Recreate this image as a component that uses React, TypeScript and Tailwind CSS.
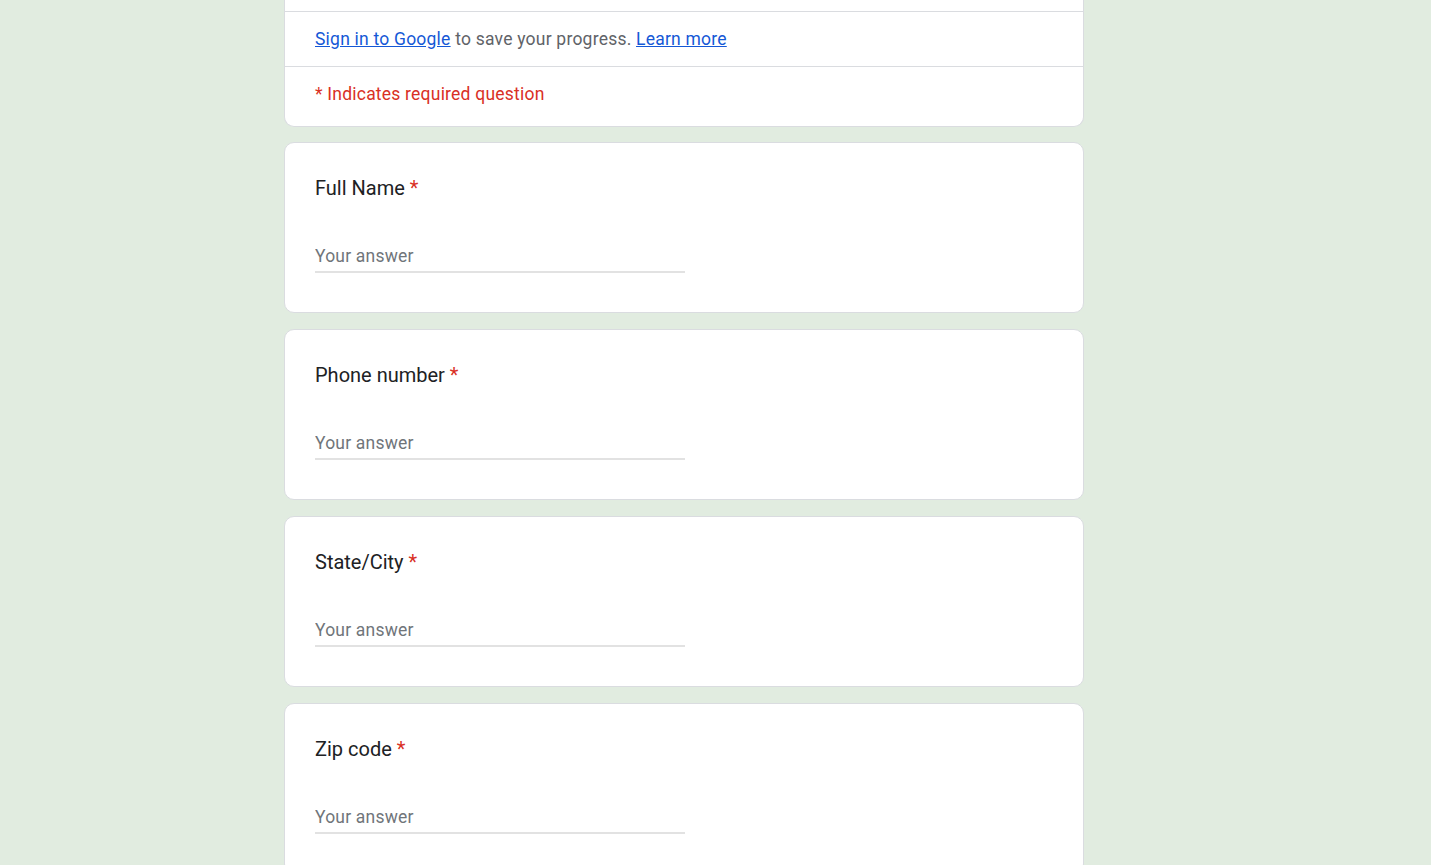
const questions = ["Full Name", "Phone number", "State/City", "Zip code"];

const QuestionCard = ({ title }: { title: string }) => (
  <div className="rounded-[10px] border border-[#dadce0] bg-white px-[30px] pt-[30px] pb-[39px]">
    <div className="h-[30px] text-[20px] leading-[30px] text-[#202124]">
      {title} <span className="text-[#d93025]">*</span>
    </div>
    <div className="mt-[41px] w-[370px]">
      <input
        type="text"
        placeholder="Your answer"
        className="block h-[24px] w-full bg-transparent text-[17.5px] leading-[24px] tracking-[0.2px] text-[#202124] outline-none placeholder:text-[#70757a]"
      />
      <div className="mt-[3px] h-[2px] bg-[#e2e2e2]" />
    </div>
  </div>
);

export default function App() {
  return (
    <div className="min-h-screen bg-[#e1ece0] font-['Roboto',sans-serif]">
      <div className="ml-[284px] flex w-[800px] flex-col gap-[16px] pb-[40px]">
        {/* header card (top cut off) */}
        <div className="-mb-[1px] rounded-b-[10px] border-x border-b border-[#dadce0] bg-white">
          <div className="h-[11px]" />
          <div className="flex h-[55px] items-center border-t border-[#dadce0] px-[30px] text-[17.5px] tracking-[0.22px] text-[#5f6368]">
            <span>
              <a href="#" className="text-[#1558d6] underline">
                Sign in to Google
              </a>{" "}
              to save your progress.{" "}
              <a href="#" className="text-[#1558d6] underline">
                Learn more
              </a>
            </span>
          </div>
          <div className="h-[60px] border-t border-[#dadce0] px-[30px] pt-[15px] text-[17.5px] leading-[25px] tracking-[0.22px] text-[#d93025]">
            * Indicates required question
          </div>
        </div>

        {questions.map((q) => (
          <QuestionCard key={q} title={q} />
        ))}
      </div>
    </div>
  );
}
